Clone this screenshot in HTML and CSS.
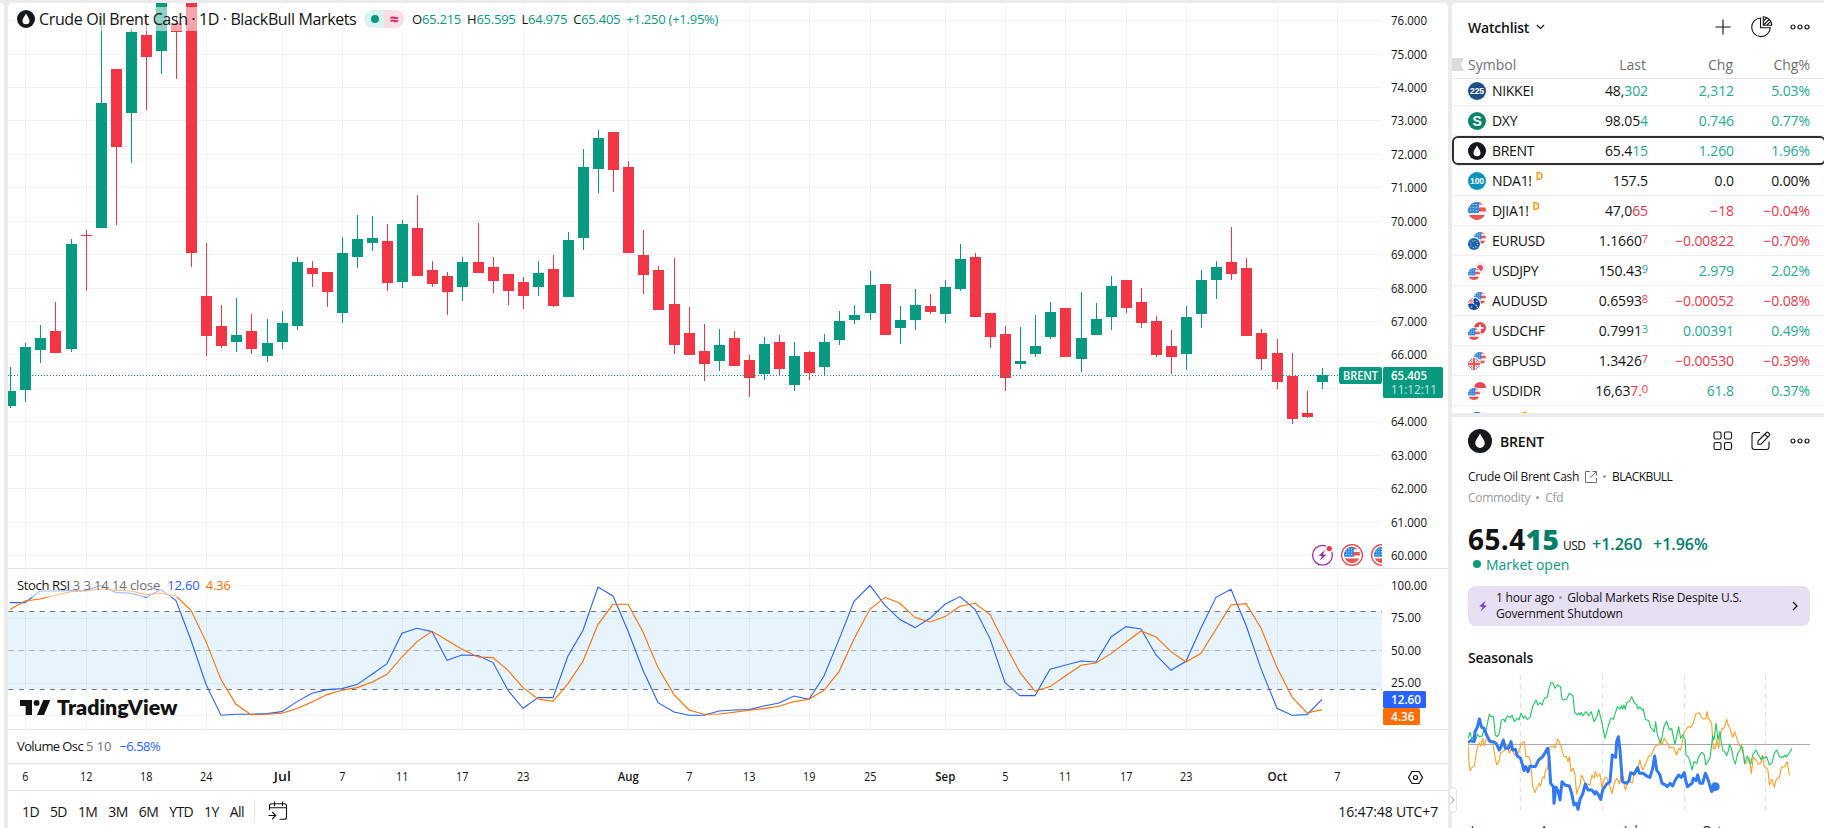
FILE: index.html
```html
<!DOCTYPE html>
<html lang="en">
    <head>
        <meta charset="utf-8">
        <link rel="stylesheet" href="styles.css">
        <title>BRENT 65.405</title>
    </head>
    <body>
        <svg class="defs" width="0" height="0">
            <defs>
                <clipPath id="round"><circle cx="9" cy="9" r="9"/></clipPath>
                <symbol id="us" viewBox="0 0 18 18">
                    <g clip-path="url(#round)">
                        <rect width="18" height="18" fill="#f5f5f5"/>
                        <path d="M0 0H18V2.5H0zM0 5.5H18V9.5H0zM0 13H18V18H0z" fill="#ef5350"/>
                        <rect width="11" height="11" fill="#2f8be6"/>
                        <path d="M2 2.5H11M2 5.5H11M2 8.5H11" stroke="#fff" stroke-width="1" stroke-dasharray="1 2"/>
                    </g>
                </symbol>
                <symbol id="eu" viewBox="0 0 18 18">
                    <circle cx="9" cy="9" r="9" fill="#1565c0"/>
                    <circle cx="9" cy="9" r="5.2" fill="none" stroke="#ffca28" stroke-width="1.6" stroke-dasharray="1.6 2.48"/>
                </symbol>
                <symbol id="jp" viewBox="0 0 18 18">
                    <circle cx="9" cy="9" r="9" fill="#e9edf5"/>
                    <circle cx="9" cy="9" r="4.4" fill="#ef4958"/>
                </symbol>
                <symbol id="au" viewBox="0 0 18 18">
                    <g clip-path="url(#round)">
                        <rect width="18" height="18" fill="#0d47a1"/>
                        <path d="M0 0L9 9M9 0L0 9M4.5 0V9M0 4.5H9" stroke="#fff" stroke-width="2"/>
                        <path d="M4.5 0V9M0 4.5H9" stroke="#ef5350" stroke-width="1.4"/>
                        <path d="M4 13.5H6.5M11 11H13M12 5H14M13 14H15" stroke="#fff" stroke-width="1.8"/>
                    </g>
                </symbol>
                <symbol id="ch" viewBox="0 0 18 18">
                    <circle cx="9" cy="9" r="9" fill="#ef4550"/>
                    <path d="M9 4V14M4 9H14" stroke="#fff" stroke-width="3"/>
                </symbol>
                <symbol id="gb" viewBox="0 0 18 18">
                    <g clip-path="url(#round)">
                        <rect width="18" height="18" fill="#1e5aa8"/>
                        <path d="M0 0L18 18M18 0L0 18" stroke="#fff" stroke-width="4"/>
                        <path d="M0 0L18 18M18 0L0 18" stroke="#ef5350" stroke-width="1.5"/>
                        <path d="M9 0V18M0 9H18" stroke="#fff" stroke-width="6"/>
                        <path d="M9 0V18M0 9H18" stroke="#ef5350" stroke-width="3.4"/>
                    </g>
                </symbol>
                <symbol id="id" viewBox="0 0 18 18">
                    <circle cx="9" cy="9" r="9" fill="#f3f3f5"/>
                    <path d="M0 9A9 9 0 0 1 18 9z" fill="#ef4550"/>
                </symbol>
                <symbol id="drop" viewBox="0 0 24 24">
                    <circle cx="12" cy="12" r="12" fill="#14181c"/>
                    <path d="M12 4.5C13.5 8 16.7 11 16.7 14.3A4.7 4.7 0 0 1 7.3 14.3C7.3 11 10.5 8 12 4.5z" fill="#fff"/>
                </symbol>
                <symbol id="dots" viewBox="0 0 20 8">
                    <g fill="none" stroke="#131313" stroke-width="1.2">
                        <circle cx="3" cy="4" r="2"/><circle cx="10" cy="4" r="2"/><circle cx="17" cy="4" r="2"/>
                    </g>
                </symbol>
            </defs>
        </svg>

        <div class="layout">
            <div class="drawings"></div>

            <div class="chart">
                <svg id="plot" class="plot" width="1440" height="788" viewBox="8 3 1440 788"></svg>

                <div class="legend main-legend">
                    <svg width="18" height="18"><use href="#drop"/></svg>
                    <span class="title">Crude Oil Brent Cash · 1D · BlackBull Markets</span>
                    <span class="status"><i class="open"></i><i class="approx">≈</i></span>
                    <span class="ohlc">
                        <span>O<b>65.215</b></span>
                        <span>H<b>65.595</b></span>
                        <span>L<b>64.975</b></span>
                        <span>C<b>65.405</b></span>
                        <span><b>+1.250 (+1.95%)</b></span>
                    </span>
                </div>
                <div class="legend stoch-legend">
                    <span>Stoch RSI</span>
                    <span class="params">3 3 14 14 close</span>
                    <span class="blue">12.60</span>
                    <span class="orange">4.36</span>
                </div>
                <div class="legend volume-legend">
                    <span>Volume Osc</span>
                    <span class="params">5 10</span>
                    <span class="blue">−6.58%</span>
                </div>

                <div class="toolbar">
                    <span>1D</span><span>5D</span><span>1M</span><span>3M</span><span>6M</span><span>YTD</span><span>1Y</span><span>All</span>
                    <i class="divider"></i>
                    <svg width="20" height="20" viewBox="0 0 20 20" fill="none" stroke="#131313" stroke-width="1.1">
                        <path d="M1.5 9V5Q1.5 2.8 3.7 2.8H16.3Q18.5 2.8 18.5 5V16Q18.5 18.3 16.3 18.3H11.5M6.5 0.5V5M14.5 0.5V5M1.5 6.8H18.5M0.5 14.5H7.5M4.2 11L7.7 14.5L4.2 18"/>
                    </svg>
                    <span class="clock">16:47:48 UTC+7</span>
                </div>
            </div>

            <div class="side">
                <div class="watchlist">
                    <div class="watch-head">
                        <span class="name">Watchlist</span>
                        <svg width="9" height="6" fill="none" stroke="#131313" stroke-width="1.1"><path d="M0.8 1L4.5 4.4L8.2 1"/></svg>
                        <span class="icons">
                            <svg class="plus" width="16" height="16" stroke="#131313" stroke-width="1.1"><path d="M8 0.5V15.5M0.5 8H15.5"/></svg>
                            <svg width="22" height="22" viewBox="0 0 22 22" fill="none" stroke="#131313" stroke-width="1.1">
                                <path d="M9.5 2A9.3 9.3 0 1 0 19.3 11.8H9.5z"/>
                                <path d="M12.3 0.8A8.8 8.8 0 0 1 20.8 9.3H12.3z"/>
                                <path d="M12.5 5L16 1.5M12.5 9L18.5 3M16 9L20 5"/>
                            </svg>
                            <svg width="20" height="8"><use href="#dots"/></svg>
                        </span>
                    </div>
                    <div class="watch-cols">
                        <svg class="mark" width="12" height="13"><path d="M0 0H12L9 6.5L12 13H0z" fill="#dbdbdb"/></svg>
                        <span class="symbol">Symbol</span><span class="last">Last</span><span class="chg">Chg</span><span class="pct">Chg%</span>
                    </div>
                    <div class="rows"><div id="rows" class="rows-inner"></div></div>
                </div>

                <div class="details">
                    <div class="detail-head">
                        <svg width="24" height="24"><use href="#drop"/></svg>
                        <span class="name">BRENT</span>
                        <span class="icons">
                            <svg width="20" height="20" fill="none" stroke="#131313" stroke-width="1.1">
                                <rect x="1" y="1" width="7" height="7" rx="1.5"/><rect x="11.5" y="1" width="7" height="7" rx="1.5"/>
                                <rect x="1" y="11.5" width="7" height="7" rx="1.5"/><rect x="11.5" y="11.5" width="7" height="7" rx="1.5"/>
                            </svg>
                            <svg class="edit" width="20" height="20" fill="none" stroke="#131313" stroke-width="1.1">
                                <path d="M9 1.5H3.5Q1 1.5 1 4V16Q1 18.5 3.5 18.5H15.5Q18 18.5 18 16V10.5"/>
                                <path d="M7 13.2V10L15.5 1.5Q16.3 0.8 17.2 1.5L18.5 2.8Q19.2 3.7 18.5 4.5L10 13.2zM13.8 3.2L16.8 6.2"/>
                            </svg>
                            <svg width="20" height="8"><use href="#dots"/></svg>
                        </span>
                    </div>
                    <div class="desc">
                        <span>Crude Oil Brent Cash</span>
                        <svg width="12" height="13" fill="none" stroke="#707070"><path d="M5 1.5H0.5V12.5H11.5V8M7.5 1.5H11.5V5.5M11.5 1.5L5.5 7.5"/></svg>
                        <i class="dot"></i>
                        <span>BLACKBULL</span>
                    </div>
                    <div class="kind"><span>Commodity</span><i class="dot"></i><span>Cfd</span></div>
                    <div class="quote">
                        <span class="price">65.4<b>15</b></span>
                        <span class="cur">USD</span>
                        <span class="delta">+1.260</span>
                        <span class="delta">+1.96%</span>
                    </div>
                    <div class="market"><i></i><span>Market open</span></div>
                    <div class="news">
                        <svg width="8" height="12" viewBox="0 0 8 12"><path d="M6.8 0.5L0.3 6.3L3.6 7L1.4 11.5L7.8 5.7L4.5 5z" fill="#7445c4"/></svg>
                        <p>1 hour ago <i class="dot"></i> Global Markets Rise Despite U.S. Government Shutdown</p>
                        <svg width="6" height="10" fill="none" stroke="#131313" stroke-width="1.2"><path d="M1 1L5 5L1 9"/></svg>
                    </div>
                    <h3>Seasonals</h3>
                    <svg id="seasonals" class="seasonals" width="342" height="153" viewBox="84 105 1026 459"></svg>
                </div>
                <div class="handle"><svg width="4" height="8" fill="none" stroke="#8c8c8c"><path d="M0.5 1L3 4L0.5 7"/></svg></div>
            </div>
        </div>

        <script src="script.js"></script>
    </body>
</html>
```
FILE: styles.css
```css
body {
    margin: 0;
    background-color: #ebebeb;
    color: #131313;
    font-family: "Trebuchet MS", "Open Sans", sans-serif;
    font-stretch: 92%;
    overflow: hidden;
}
.defs {
    position: absolute;
}
svg {
    flex: none;
    display: block;
}
.layout {
    display: flex;
    gap: 4px;
    height: 825px;
    padding-top: 3px;
}
.drawings {
    width: 4px;
    background-color: white;
    border-top-right-radius: 4px;
}
.chart {
    position: relative;
    display: flex;
    flex-direction: column;
    width: 1440px;
    background-color: white;
    border-radius: 4px 4px 0 0;
    overflow: hidden;
}
.plot text {
    font-size: 12px;
    fill: #131313;
}
.plot text.bold {
    font-weight: 600;
}
.plot text.light {
    fill: white;
}
.plot text.faded {
    fill: #c4e7e2;
}
.plot text.logo {
    font-family: Lato, sans-serif;
    font-size: 21px;
    font-weight: 800;
    font-stretch: normal;
}

/* legends lie over the panes */
.legend {
    position: absolute;
    left: 5px;
    display: flex;
    align-items: center;
    height: 24px;
    padding: 0 4px;
    background-color: rgba(255, 255, 255, 0.55);
    font-size: 13px;
    letter-spacing: -0.35px;
    white-space: nowrap;
}
.main-legend {
    top: 4px;
}
.title {
    width: 318px;
    margin-left: 4px;
    font-size: 16px;
    letter-spacing: -0.37px;
}
.status {
    display: flex;
    width: 40px;
    height: 18px;
    margin-left: 7px;
    border-radius: 9px;
    overflow: hidden;
    background-color: #dcf2ef;
}
.status i {
    width: 20px;
    display: flex;
    align-items: center;
    justify-content: center;
    font-style: normal;
}
.status .open::before {
    content: "";
    width: 8px;
    height: 8px;
    margin-left: 2px;
    border-radius: 50%;
    background-color: #089981;
}
.status .approx {
    background-color: #fbdde8;
    color: #e0185e;
    font-size: 16px;
    font-weight: bold;
}
.ohlc {
    display: flex;
    gap: 6px;
    margin-left: 8px;
    letter-spacing: -0.24px;
}
.ohlc b {
    font-weight: normal;
    color: #089981;
}
.stoch-legend {
    top: 570px;
}
.params {
    color: #707070;
    margin-left: 3px;
    letter-spacing: -0.1px;
}
.blue {
    color: #2962ff;
    margin-left: 7px;
    letter-spacing: -0.15px;
}
.orange {
    color: #ff6d00;
    margin-left: 6px;
    letter-spacing: -0.1px;
}
.volume-legend {
    top: 731px;
    letter-spacing: -0.6px;
}
.volume-legend .blue {
    margin-left: 8px;
    letter-spacing: -0.5px;
}
.toolbar {
    display: flex;
    align-items: center;
    height: 37px;
    padding: 3px 10px 0 14px;
    box-sizing: border-box;
    font-size: 14px;
    gap: 11px;
    letter-spacing: -0.6px;
}
.divider {
    width: 1px;
    height: 22px;
    margin-right: 2px;
    margin-left: -1px;
    background-color: #e6e6e6;
}
.clock {
    margin-left: auto;
    letter-spacing: -0.15px;
}

.side {
    position: relative;
    display: flex;
    flex-direction: column;
    gap: 4px;
    width: 372px;
}
.watchlist {
    height: 410px;
    background-color: white;
    border-top-left-radius: 4px;
}
.watch-head {
    display: flex;
    align-items: center;
    height: 48px;
    padding: 0 14px 0 16px;
    gap: 7px;
    font-size: 14px;
}
.name {
    font-weight: 600;
    letter-spacing: -0.2px;
}
.icons {
    display: flex;
    align-items: center;
    gap: 17px;
    margin-left: auto;
}
.plus {
    margin-right: 3px;
}
.watch-cols {
    display: flex;
    align-items: center;
    height: 27px;
    border-bottom: 1px solid #e6e6e6;
    color: #707070;
    font-size: 14px;
}
.mark {
    margin-right: 4px;
}
.symbol {
    width: 124px;
}
.last, .chg, .pct {
    text-align: right;
}
.watch-cols .last {
    width: 54px;
    margin-right: 2px;
}
.chg {
    width: 87px;
}
.pct {
    width: 76px;
}
.watch-cols .chg {
    width: 85px;
}
.watch-cols .pct {
    width: 77px;
}
.rows {
    height: 334px;
    overflow: hidden;
}
.rows-inner {
    margin-top: -3px;
}
.row {
    display: flex;
    align-items: center;
    position: relative;
    height: 30px;
    padding-left: 16px;
    box-sizing: border-box;
    border-bottom: 1px solid #efefef;
    font-size: 14px;
    letter-spacing: -0.1px;
}
.row .symbol {
    width: 96px;
    margin-left: 6px;
    letter-spacing: -0.3px;
}
.row .last {
    width: 60px;
}
.row .chg {
    width: 86px;
}
.row sup {
    font-size: 11px;
    line-height: 0;
    vertical-align: 3px;
}
.row .symbol sup {
    margin-left: 4px;
    color: #ff9800;
    font-size: 10px;
    font-weight: bold;
    vertical-align: 6px;
}
.up {
    color: #22ab94;
}
.down {
    color: #f23645;
}
.selected::after {
    content: "";
    position: absolute;
    left: 0;
    right: -2px;
    top: 0;
    height: 25px;
    border: 2px solid #2e2e2e;
    border-radius: 6px;
}

.details {
    flex: 1;
    padding: 12px 14px 0 16px;
    background-color: white;
    font-size: 12px;
}
.detail-head {
    display: flex;
    align-items: center;
    gap: 8px;
    font-size: 14px;
    height: 24px;
}
.details .icons {
    gap: 18px;
}
.edit {
    margin-right: 1px;
}
.desc, .kind {
    display: flex;
    align-items: center;
    height: 20px;
    margin-top: 13px;
    gap: 6px;
}
.desc {
    letter-spacing: -0.3px;
}
.desc span:last-child {
    letter-spacing: -0.6px;
}
.kind {
    margin-top: 1px;
    color: #9c9c9c;
    letter-spacing: -0.3px;
}
.dot {
    display: inline-block;
    width: 3px;
    height: 3px;
    border-radius: 50%;
    background-color: #9c9c9c;
}
.quote {
    display: flex;
    align-items: baseline;
    height: 34px;
    margin-top: 15px;
    color: #131313;
    line-height: 34px;
    white-space: nowrap;
}
.price {
    width: 91px;
    margin-right: 4px;
    font-size: 28px;
    font-weight: 700;
    letter-spacing: 0.4px;
}
.price b, .delta {
    color: #00806a;
}
.cur {
    width: 21px;
    letter-spacing: -0.5px;
}
.delta {
    width: 53px;
    margin-left: 8px;
    font-size: 16px;
    font-weight: 600;
}
.market {
    display: flex;
    align-items: center;
    height: 20px;
    margin-top: -2px;
    padding-left: 5px;
    gap: 5px;
    color: #089981;
    font-size: 14px;
}
.market i {
    width: 8px;
    height: 8px;
    border-radius: 50%;
    background-color: #089981;
}
.news {
    display: flex;
    align-items: center;
    height: 40px;
    margin-top: 12px;
    padding: 0 12px 0 11px;
    box-sizing: border-box;
    border-radius: 8px;
    background-color: #e7dff3;
    letter-spacing: -0.2px;
}
.news p {
    width: 260px;
    margin: 0 auto 0 9px;
    line-height: 16px;
}
.news .dot {
    margin: 0 2px;
    vertical-align: 3px;
}
h3 {
    margin: 22px 0 7px;
    font-size: 14px;
    line-height: 20px;
    font-weight: 600;
    letter-spacing: -0.2px;
}
.seasonals text {
    font-size: 36px;
    fill: #131313;
}
.handle {
    position: absolute;
    left: -3px;
    top: 784px;
    width: 8px;
    height: 26px;
    display: flex;
    align-items: center;
    justify-content: center;
    border: 1px solid #e6e6e6;
    border-radius: 5px;
    box-sizing: border-box;
    background-color: white;
}
```
FILE: script.js
```js
const UP = '#089981';
const DOWN = '#f23645';

// [left, high, low, body top, body bottom, up]
const candles = [
    [5, 367, 408, 391, 406, 1], [20, 343, 402, 347, 390, 1], [35, 325, 363, 338, 350, 1], [50, 302, 353, 331, 353, 0],
    [66, 239, 352, 244, 349, 1], [81, 230, 291, 235, 236, 0], [96, 14, 228, 103, 228, 1], [111, 69, 225, 69, 147, 0],
    [126, 28, 163, 32, 113, 1], [141, 14, 110, 35, 57, 0], [156, 0, 74, 0, 51, 1], [171, 16, 79, 23, 32, 0],
    [186, 0, 267, 0, 253, 0], [201, 243, 356, 296, 336, 0], [216, 305, 348, 326, 346, 0], [231, 298, 352, 335, 342, 1],
    [246, 314, 354, 331, 349, 0], [262, 319, 362, 343, 356, 1], [277, 311, 349, 323, 342, 1], [292, 257, 330, 262, 326, 1],
    [307, 261, 287, 268, 274, 0], [322, 272, 307, 272, 292, 0], [337, 237, 323, 253, 313, 1], [352, 215, 268, 239, 257, 1],
    [367, 216, 251, 238, 243, 1], [382, 224, 291, 241, 283, 0], [397, 220, 288, 224, 282, 1], [412, 195, 276, 228, 276, 0],
    [427, 261, 287, 270, 284, 0], [442, 272, 315, 276, 292, 0], [457, 257, 301, 262, 287, 1], [473, 223, 273, 262, 273, 0],
    [488, 257, 293, 267, 281, 0], [503, 274, 305, 274, 291, 0], [518, 277, 309, 282, 296, 0], [533, 261, 296, 273, 287, 1],
    [548, 255, 307, 269, 306, 0], [563, 232, 297, 240, 297, 1], [578, 149, 250, 167, 238, 1], [593, 130, 193, 138, 169, 1],
    [608, 132, 192, 132, 170, 0], [623, 161, 253, 167, 253, 0], [638, 230, 294, 255, 275, 0], [653, 266, 310, 270, 310, 0],
    [669, 258, 354, 304, 345, 0], [684, 307, 355, 333, 355, 0], [699, 324, 381, 351, 364, 0], [714, 329, 371, 345, 361, 1],
    [729, 331, 366, 338, 366, 0], [744, 355, 397, 360, 378, 0], [759, 337, 380, 344, 374, 1], [774, 335, 376, 342, 369, 0],
    [789, 342, 391, 356, 385, 1], [804, 351, 380, 352, 373, 0], [819, 334, 376, 342, 367, 1], [834, 311, 345, 321, 340, 1],
    [849, 305, 324, 315, 320, 1], [865, 271, 320, 285, 313, 1], [880, 284, 335, 284, 335, 0], [895, 306, 344, 320, 328, 1],
    [910, 289, 330, 305, 320, 1], [925, 294, 314, 306, 312, 0], [940, 280, 323, 287, 314, 1], [955, 244, 291, 259, 289, 1],
    [970, 253, 317, 257, 317, 0], [985, 313, 348, 313, 337, 0], [1000, 326, 391, 334, 378, 0], [1015, 327, 369, 361, 364, 1],
    [1030, 315, 357, 346, 354, 1], [1045, 302, 339, 312, 337, 1], [1060, 308, 357, 308, 357, 0], [1076, 292, 372, 338, 359, 1],
    [1091, 303, 335, 319, 335, 1], [1106, 276, 330, 286, 317, 1], [1121, 280, 313, 280, 308, 0], [1136, 288, 328, 302, 323, 0],
    [1151, 316, 357, 321, 355, 0], [1166, 330, 374, 346, 357, 0], [1181, 306, 370, 317, 354, 1], [1196, 270, 328, 280, 314, 1],
    [1211, 261, 299, 267, 280, 1], [1226, 227, 280, 262, 274, 0], [1241, 258, 336, 268, 336, 0], [1256, 329, 370, 333, 359, 0],
    [1272, 339, 389, 353, 382, 0], [1287, 353, 424, 376, 419, 0], [1302, 391, 418, 413, 417, 0], [1317, 368, 389, 375, 382, 1]
];

// stochastic lines, one y per candle
const kLine = [
    602.3, 602.3, 590.7, 590.7, 590.3, 590.3, 585, 592.3, 593, 597, 589.3, 600.3, 640, 684, 715, 714, 714, 713.3, 711.3, 701.3,
    693, 689.3, 688.3, 684.3, 674, 663.3, 633, 628, 631.3, 660, 654.7, 655.3, 662.3, 690, 708, 697.3, 697.3, 655.7, 630, 586.7,
    595.7, 630.7, 670, 702.3, 711.7, 715, 715, 710.7, 709.7, 709.3, 705.7, 702.7, 695.7, 699, 675.7, 639.3, 601, 585, 605, 619.3,
    627.3, 618, 604, 596.3, 609, 638.3, 682.3, 695.3, 695.3, 669, 665, 660.7, 661.7, 636.7, 626.3, 628.7, 654.7, 670, 661, 627.7,
    597, 589, 625, 668.3, 708, 715, 714.3, 699
];
const dLine = [
    609.3, 600.7, 598.7, 595, 591.3, 590.7, 588.7, 590, 590.7, 594.3, 593, 595.7, 610, 641.3, 679.3, 704, 714.3, 714, 713, 708.3,
    701.7, 694.3, 690, 687.3, 682, 674, 656.7, 641.3, 631, 640, 649, 656.7, 657.3, 670, 687.3, 698.7, 701, 683.3, 661, 624,
    604, 604, 631.7, 667.3, 694.3, 709.7, 714, 713.7, 712, 710, 708.3, 706, 701.3, 699, 690, 671.3, 638.7, 608.7, 597, 603,
    617.3, 621.7, 616.3, 606, 603, 614.3, 644, 672.3, 690.7, 686.3, 676, 665, 662.7, 653.3, 642, 630.7, 636.7, 651.3, 661.7, 653,
    629, 604.7, 603.3, 627.7, 667.3, 696.7, 712.7, 709.3
];

const dates = [
    [25, '6'], [86, '12'], [146, '18'], [206, '24'], [282, 'Jul'], [342, '7'], [402, '11'], [462, '17'], [523, '23'],
    [628, 'Aug'], [689, '7'], [749, '13'], [809, '19'], [870, '25'], [945, 'Sep'], [1005, '5'], [1065, '11'], [1126, '17'],
    [1186, '23'], [1277, 'Oct'], [1337, '7']
];

const rect = (x, y, w, h, fill, extra = '') => `<rect x="${x}" y="${y}" width="${w}" height="${h}" fill="${fill}" ${extra}/>`;

function label(x, y, text, width, cls = '') {
    return `<text x="${x}" y="${y}" class="${cls}" textLength="${width}" lengthAdjust="spacingAndGlyphs">${text}</text>`;
}

function drawPlot() {
    const grid = '#f2f2f2';
    let out = '';

    out += rect(8, 611, 1374, 78, '#e7f4fe');
    for (let i = 0; i < 17; i++) {
        const y = Math.floor(20.6 + i * 33.43);
        out += rect(8, y, 1374, 1, grid);
        const price = 76 - i;
        if (price !== 65) {
            out += label(1391, y + 5, price + '.000', 36);
        }
    }
    [585, 618, 650, 683, 715].forEach(y => { out += rect(8, y, 1374, 1, 'rgba(46,46,46,0.06)'); });
    dates.forEach(([x]) => {
        out += rect(x, 3, 1, 565, 'rgba(46,46,46,0.06)') + rect(x, 568, 1, 161, 'rgba(46,46,46,0.06)');
    });

    candles.forEach(([x, high, low, top, bottom, up]) => {
        const color = up ? UP : DOWN;
        out += rect(x + 5, high, 1, low - high, color) + rect(x, top, 11, bottom - top, color);
    });
    out += `<path d="M8 375.5H1339" stroke="${UP}" stroke-dasharray="1 2"/>`;

    [[611.5, '#6f7280'], [650.5, '#a9b4c0'], [689.5, '#6f7280']].forEach(([y, color]) => {
        out += `<path d="M8.5 ${y}H1382" stroke="${color}" stroke-dasharray="5 5.4"/>`;
    });
    [[kLine, '#2962ff'], [dLine, '#ff6d00']].forEach(([line, color]) => {
        const pts = line.map((y, i) => `${candles[i][0] + 5},${y + 0.3}`).join(' ');
        out += `<polyline points="${pts}" fill="none" stroke="${color}" stroke-width="1.1"/>`;
    });

    // axis labels and pane borders
    out += label(1391, 590, '100.00', 36) + label(1391, 622, '75.00', 30);
    out += label(1391, 655, '50.00', 30) + label(1391, 687, '25.00', 30);
    [568, 729, 763, 791 - 1].forEach(y => { out += rect(8, y, 1440, 1, '#e6e6e6'); });
    dates.forEach(([x, text]) => {
        const month = isNaN(text);
        const w = month ? { Jul: 17, Aug: 21, Sep: 20, Oct: 19.5 }[text] : text.length * 6.2;
        out += label(x + 0.3 - w / 2, 781, text, w, month ? 'bold' : '');
    });

    // price tags
    out += rect(1339, 367, 43, 17, UP, 'rx="2"') + label(1343, 380, 'BRENT', 35, 'bold light');
    out += rect(1383, 367, 60, 31, UP, 'rx="1.5"');
    out += label(1391, 380, '65.405', 36, 'bold light') + label(1391, 394, '11:12:11', 46, 'faded');
    out += rect(1383, 691, 43, 17, '#2962ff', 'rx="1.5"') + label(1391, 704, '12.60', 30, 'bold light');
    out += rect(1383, 708, 37, 17, '#ff6d00', 'rx="1.5"') + label(1391, 721, '4.36', 23.5, 'bold light');

    // events
    out += `<circle cx="1322.5" cy="555.2" r="9.9" fill="white" stroke="#9c27b0" stroke-width="1.3"/>
        <path d="M1325 550L1318.5 555.8L1322 556L1319.8 560.5L1326.5 554.8L1323 554.4z" fill="#9c27b0"/>
        <circle cx="1329.3" cy="548.6" r="4" fill="white"/><circle cx="1329.3" cy="548.6" r="2.6" fill="${DOWN}"/>`;
    out += '<svg x="1340" y="543" width="42" height="24">';
    [12, 42].forEach(cx => {
        out += `<circle cx="${cx}" cy="12" r="10.4" fill="white" stroke="${DOWN}" stroke-width="1.2"/>
            <use href="#us" x="${cx - 8}" y="4" width="16" height="16"/>`;
    });
    out += '</svg>';

    // logo
    out += `<g fill="#131313"><path d="M20 700H32V715H25.7V706H20z"/><circle cx="36.6" cy="702.9" r="2.9"/><path d="M43.3 700H50.3L44 715H37z"/></g>`;
    out += label(57, 715, 'TradingView', 120.5, 'logo');

    // axis settings
    out += `<g fill="none" stroke="#131313" stroke-width="1.2"><path d="M1412 771.5H1419L1422.5 777.5L1419 783.5H1412L1408.5 777.5z"/><circle cx="1415.5" cy="777.5" r="2"/></g>`;

    document.getElementById('plot').innerHTML = out;
}

const green = '84,295 90,277 95,298 100,290 106,303 112,283 118,290 126,288 132,270 138,272 148,222 153,230 160,228 166,285 172,290 178,278 184,240 192,238 195,246 199,232 204,228 212,232 216,226 220,238 224,245 230,235 237,240 243,220 250,235 255,228 262,238 270,232 278,200 283,190 288,180 294,195 300,188 306,195 313,175 322,172 327,145 333,127 340,130 345,145 352,135 362,140 364,165 367,180 380,178 388,160 394,163 399,168 404,218 412,225 416,219 420,225 424,217 428,228 438,215 446,228 454,215 462,245 470,232 476,208 485,245 495,295 503,265 512,235 520,238 532,200 540,207 544,197 548,207 552,195 556,208 560,188 567,185 575,170 583,188 590,195 594,207 600,200 606,210 610,208 616,238 626,242 632,262 640,272 643,276 647,245 652,285 662,308 666,290 672,260 680,243 688,270 695,265 700,290 705,312 712,280 716,260 722,295 728,285 735,297 738,345 744,350 748,358 752,372 756,390 762,365 770,370 776,350 785,337 793,345 797,375 803,365 810,355 813,330 818,288 822,300 828,250 834,300 840,275 844,310 848,330 854,335 860,347 866,330 868,312 874,325 880,355 886,372 893,340 900,330 904,318 910,340 914,370 922,348 927,362 932,373 938,345 948,330 955,345 959,350 964,360 968,349 973,355 980,350 988,375 996,368 1003,340 1010,330 1014,338 1018,350 1028,352 1035,345 1038,351 1044,345 1050,335 1056,325';
const orange = '84,315 87,365 90,392 96,382 103,378 108,345 112,322 118,310 122,318 128,295 132,318 138,300 148,300 158,305 164,345 170,375 178,362 182,338 188,335 195,330 202,315 208,340 214,325 222,342 230,348 238,330 246,308 253,305 258,350 266,350 272,365 278,440 285,458 292,440 298,430 302,438 306,418 310,410 313,415 316,390 322,388 326,350 330,322 338,318 345,324 353,297 362,315 367,335 372,350 380,350 384,365 388,350 393,395 400,385 405,405 408,440 410,462 414,448 420,438 424,405 430,415 436,435 444,432 450,435 456,405 462,415 466,395 473,410 480,402 486,445 493,415 500,412 508,435 516,460 523,430 530,415 534,420 538,432 543,407 550,410 552,432 556,450 563,430 568,412 572,427 578,428 582,398 588,385 593,385 600,360 604,380 608,390 616,375 625,350 634,345 640,330 646,318 656,315 660,302 666,315 672,295 680,305 688,325 696,320 702,325 710,345 716,325 722,330 728,300 732,278 738,270 744,260 752,262 760,250 767,222 778,218 784,232 792,238 798,235 801,215 805,235 815,250 820,328 826,325 830,300 836,325 840,290 846,265 852,265 860,238 866,260 870,265 878,292 884,275 892,300 898,315 908,320 914,372 922,365 928,355 934,400 940,352 948,360 955,372 962,370 967,345 973,380 980,385 984,390 988,435 996,418 1003,442 1008,420 1018,412 1024,382 1034,380 1042,365 1048,405';
const blue = '84,308 92,302 102,305 105,275 112,262 118,237 125,262 132,265 140,285 150,305 160,305 168,310 178,330 184,318 190,300 196,325 206,325 213,305 218,330 226,328 232,348 242,355 252,392 257,380 264,395 270,378 286,380 296,360 308,350 323,325 327,350 332,430 340,440 342,490 348,442 355,455 360,480 366,425 376,436 388,438 395,460 402,495 409,490 414,508 420,478 428,462 436,432 444,450 456,450 464,462 468,455 474,462 482,478 488,450 500,432 510,425 517,345 527,352 530,305 535,290 540,330 547,425 560,430 567,422 572,398 583,402 593,383 598,400 610,400 620,408 630,412 638,385 644,348 650,390 660,405 666,430 675,434 682,440 690,430 698,438 706,420 716,405 724,412 733,398 738,425 742,440 756,430 760,415 768,422 773,405 780,430 788,430 796,400 803,415 815,455 826,440';

function drawSeasonals() {
    let out = '';
    [241, 488, 734, 977].forEach(x => {
        out += `<path d="M${x} 105V516" stroke="#dcdcdc" stroke-width="3" stroke-dasharray="15 13"/>`;
    });
    out += '<path d="M84 313.5H1110" stroke="#a9abb3" stroke-width="3"/>';
    [[orange, '#ffa028', 3.4], [green, '#21c962', 3.4], [blue, '#3179f5', 9]].forEach(([pts, color, w]) => {
        out += `<polyline points="${pts}" fill="none" stroke="${color}" stroke-width="${w}" stroke-linejoin="round"/>`;
    });
    out += '<circle cx="826" cy="440" r="13" fill="#3179f5"/>';
    [[92, 'Jan'], [301, 'Apr'], [552, 'Jul'], [787, 'Oct']].forEach(([x, text]) => {
        out += `<text x="${x}" y="585">${text}</text>`;
    });
    document.getElementById('seasonals').innerHTML = out;
}

const single = name => `<svg width="18" height="18"><use href="#${name}"/></svg>`;
const badge = (text, color, size) => `<svg width="18" height="18"><circle cx="9" cy="9" r="9" fill="${color}"/>
    <text x="9" y="${9 + size * 0.36}" text-anchor="middle" font-family="Liberation Sans, sans-serif" font-weight="bold" font-size="${size}" fill="white">${text}</text></svg>`;
const pair = (front, back) => `<svg width="18" height="18"><use href="#${back}" x="6" y="0" width="12" height="12"/>
    <circle cx="6" cy="12" r="7" fill="white"/><use href="#${front}" x="0" y="6" width="12" height="12"/></svg>`;

// [icon, symbol, delayed, last, coloured tail, pip, chg, chg%, direction]
const rows = [
    [badge('225', '#1f4e86', 8.6), 'NIKKEI', 0, '48,', '302', '', '2,312', '5.03%', 'up'],
    [badge('S', '#0a8568', 14), 'DXY', 0, '98.05', '4', '', '0.746', '0.77%', 'up'],
    [single('drop'), 'BRENT', 0, '65.4', '15', '', '1.260', '1.96%', 'up'],
    [badge('100', '#0593bd', 8.6), 'NDA1!', 1, '157.5', '', '', '0.0', '0.00%', ''],
    [single('us'), 'DJIA1!', 1, '47,0', '65', '', '−18', '−0.04%', 'down'],
    [pair('eu', 'us'), 'EURUSD', 0, '1.1660', '', '7', '−0.00822', '−0.70%', 'down'],
    [pair('us', 'jp'), 'USDJPY', 0, '150.43', '', '9', '2.979', '2.02%', 'up'],
    [pair('au', 'us'), 'AUDUSD', 0, '0.6593', '', '8', '−0.00052', '−0.08%', 'down'],
    [pair('us', 'ch'), 'USDCHF', 0, '0.7991', '', '3', '0.00391', '0.49%', 'up'],
    [pair('gb', 'us'), 'GBPUSD', 0, '1.3426', '', '7', '−0.00530', '−0.39%', 'down'],
    [pair('us', 'id'), 'USDIDR', 0, '16,63', '7.', '0', '61.8', '0.37%', 'up', 'down'],
    [badge('', '#1f6fc0', 8), 'ES1!', 1, '', '', '', '', '', '']
];

function drawRows() {
    document.getElementById('rows').innerHTML = rows.map(([icon, symbol, delayed, last, tail, pip, chg, pct, dir, lastDir]) => `
        <div class="row ${symbol === 'BRENT' ? 'selected' : ''}">
            ${icon}
            <span class="symbol">${symbol}${delayed ? '<sup>D</sup>' : ''}</span>
            <span class="last">${last}<span class="${lastDir || dir}">${tail}${pip ? `<sup>${pip}</sup>` : ''}</span></span>
            <span class="chg ${dir}">${chg}</span>
            <span class="pct ${dir}">${pct}</span>
        </div>`).join('');
}

drawPlot();
drawSeasonals();
drawRows();
```
